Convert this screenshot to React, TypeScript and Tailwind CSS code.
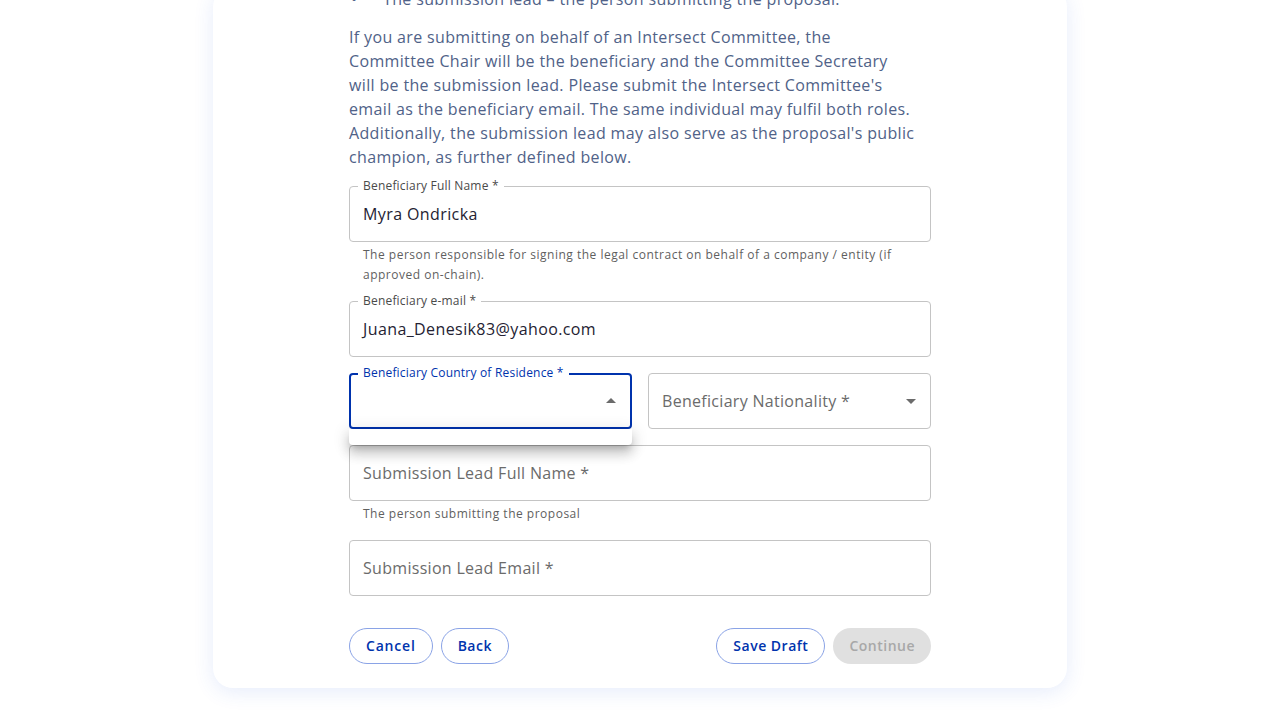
import React from "react";

const font = { fontFamily: '"Open Sans", "Liberation Sans", sans-serif' };

type FieldProps = {
  label: string;
  value?: string;
  helper?: React.ReactNode;
};

const Helper = ({ children }: { children: React.ReactNode }) => (
  <p className="mt-[3px] mx-[14px] text-xs leading-5 tracking-[0.5px] text-[#5f5f5f]">{children}</p>
);

const OutlinedField = ({ label, value, helper }: FieldProps) => {
  if (!value) {
    return (
      <div className="flex flex-col">
        <div className="h-14 rounded border border-[#c4c4c4] flex items-center px-[13px]">
          <span className="text-base tracking-[0.3px] text-[#6b6b6b]">{label}</span>
        </div>
        {helper && <Helper>{helper}</Helper>}
      </div>
    );
  }
  return (
    <div className="flex flex-col">
      <div className="relative h-14 rounded border border-[#c4c4c4] flex items-center px-[13px] pb-[1px]">
        <span className="absolute -top-[9px] left-[8px] bg-white px-[5px] text-xs leading-4 tracking-[0.2px] text-[#4a4a4a]">
          {label}
        </span>
        <span className="text-base tracking-[0.4px] text-[#242232]">{value}</span>
      </div>
      {helper && <Helper>{helper}</Helper>}
    </div>
  );
};

const Caret = ({ up }: { up?: boolean }) => (
  <svg viewBox="0 0 24 24" className={`w-6 h-6 fill-[#6b6b6b] ${up ? "rotate-180" : ""}`}>
    <path d="M7 10l5 5 5-5z" />
  </svg>
);

const btn =
  "h-9 px-4 rounded-full border border-[#8aa3e6] text-sm font-semibold tracking-[0.5px] text-[#0033ad]";

export default function App() {
  return (
    <div className="min-h-screen bg-white flex justify-center" style={font}>
      <div className="w-[854px] -mt-[13px] mb-8 bg-white rounded-[20px] shadow-[0_4px_20px_rgba(47,98,220,0.12)] px-[136px] pb-6">
        <ul className="text-base leading-6 tracking-[0.35px] text-[#506288]">
          <li className="flex items-start">
            <span className="w-[34px] shrink-0 pl-[2px]">•</span>
            <span>The submission lead – the person submitting the proposal.</span>
          </li>
        </ul>

        <p className="mt-[14px] text-base leading-6 tracking-[0.35px] text-[#506288]">
          If you are submitting on behalf of an Intersect Committee, the
          <br />
          Committee Chair will be the beneficiary and the Committee Secretary
          <br />
          will be the submission lead. Please submit the Intersect Committee's
          <br />
          email as the beneficiary email. The same individual may fulfil both roles.
          <br />
          Additionally, the submission lead may also serve as the proposal's public
          <br />
          champion, as further defined below.
        </p>

        <div className="mt-[17px] flex flex-col gap-4">
          <OutlinedField
            label="Beneficiary Full Name *"
            value="Myra Ondricka"
            helper={
              <>
                The person responsible for signing the legal contract on behalf of a company / entity (if
                <br />
                approved on-chain).
              </>
            }
          />
          <OutlinedField label="Beneficiary e-mail *" value="Juana_Denesik83@yahoo.com" />

          <div className="grid grid-cols-2 gap-4">
            <div className="relative">
              <div className="relative h-14 rounded border-2 border-[#0033ad] flex items-center justify-end pr-[7px]">
                <span className="absolute -top-[10px] left-[7px] bg-white px-[5px] text-xs leading-4 tracking-[0.2px] text-[#0033ad]">
                  Beneficiary Country of Residence *
                </span>
                <Caret up />
              </div>
              <div className="absolute left-0 right-0 top-full h-4 bg-white rounded-b shadow-[0_5px_6px_-3px_rgba(0,0,0,0.2),0_9px_12px_1px_rgba(0,0,0,0.14),0_3px_16px_2px_rgba(0,0,0,0.12)]" />
            </div>
            <div className="h-14 rounded border border-[#c4c4c4] flex items-center justify-between pl-[13px] pr-[7px]">
              <span className="text-base tracking-[0.3px] text-[#6b6b6b]">Beneficiary Nationality *</span>
              <Caret />
            </div>
          </div>

          <OutlinedField label="Submission Lead Full Name *" helper="The person submitting the proposal" />
          <OutlinedField label="Submission Lead Email *" />
        </div>

        <div className="mt-8 flex items-center justify-between">
          <div className="flex gap-2">
            <button className={`${btn} tracking-[0.8px]`}>Cancel</button>
            <button className={btn}>Back</button>
          </div>
          <div className="flex gap-2">
            <button className={btn}>Save Draft</button>
            <button className="h-9 px-4 rounded-full bg-[#e0e0e0] text-sm font-semibold tracking-[0.5px] text-[#a8a8a8]">
              Continue
            </button>
          </div>
        </div>
      </div>
    </div>
  );
}
